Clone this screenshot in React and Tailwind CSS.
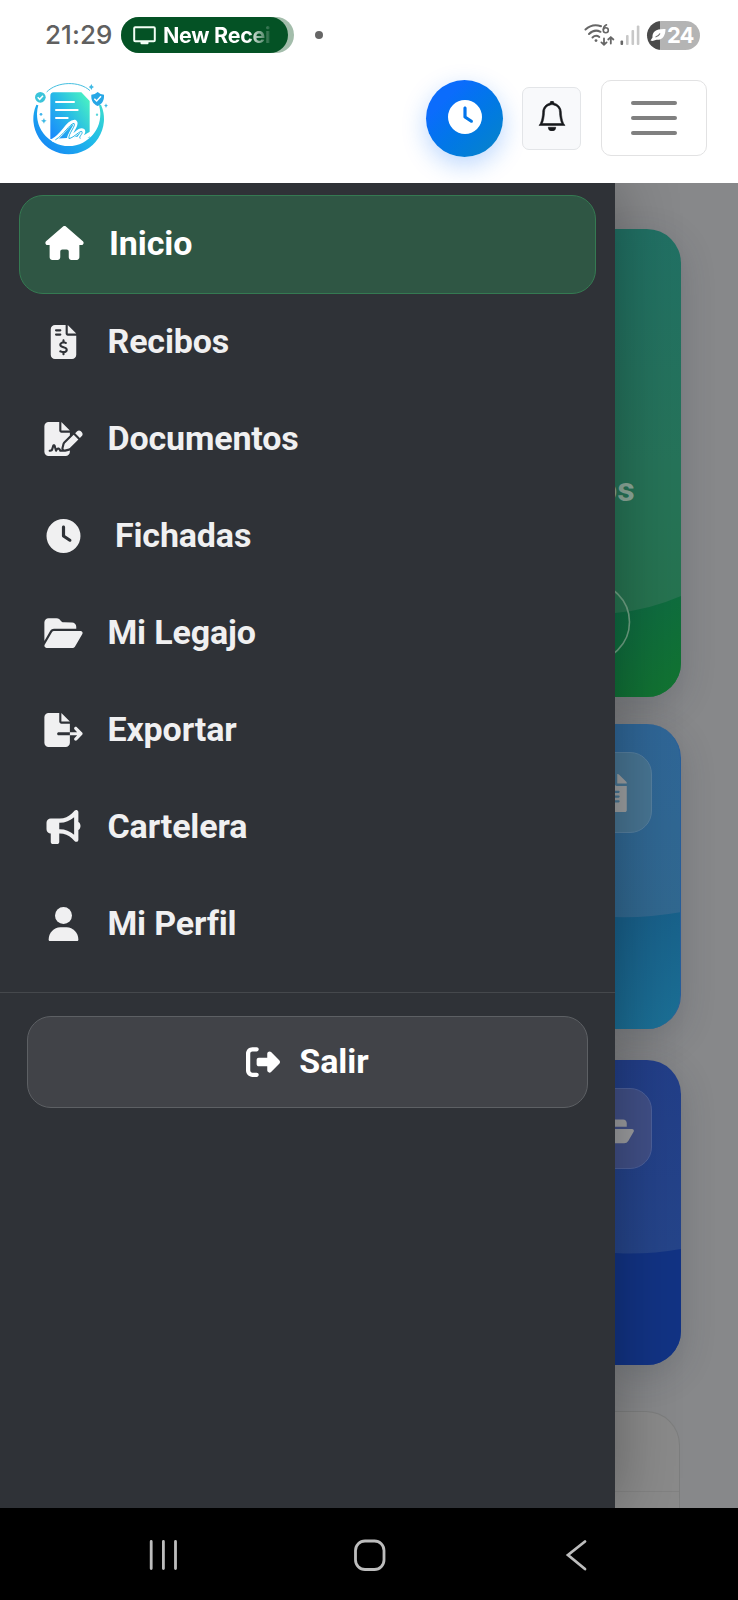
import React from "react";
import {
  FaHouse,
  FaFileInvoiceDollar,
  FaFileSignature,
  FaClock,
  FaFolderOpen,
  FaFileExport,
  FaBullhorn,
  FaRightFromBracket,
} from "react-icons/fa6";
import { FaFileAlt, FaFolderOpen as FaFolderOpenWide } from "react-icons/fa";
import { BsBell } from "react-icons/bs";

function UserIcon({ className }) {
  return (
    <svg className={className} viewBox="0 0 448 512" fill="currentColor">
      <circle cx="224" cy="128" r="128" />
      <path d="M0 492C0 388 78 304 178 304h92c100 0 178 84 178 188 0 12-8 20-20 20H20c-12 0-20-8-20-20z" />
    </svg>
  );
}

const items = [
  { label: "Recibos", icon: FaFileInvoiceDollar },
  { label: "Documentos", icon: FaFileSignature },
  { label: "Fichadas", icon: FaClock, indent: true },
  { label: "Mi Legajo", icon: FaFolderOpen },
  { label: "Exportar", icon: FaFileExport },
  { label: "Cartelera", icon: FaBullhorn },
  { label: "Mi Perfil", icon: UserIcon },
];

function StatusBar() {
  return (
    <div className="flex h-[70px] items-center pl-[45px] pr-[38px] font-['Inter',sans-serif]">
      <span className="w-[76px] whitespace-nowrap text-[26px] font-medium leading-none tracking-[0.1px] text-[#606060]">
        21:29
      </span>
      <div className="h-[36px] w-[173px] rounded-full bg-[#a3bdab]">
        <div className="flex h-full w-[167px] items-center gap-[7px] overflow-hidden rounded-full bg-[#045225] pl-[12px]">
          <svg width="23" height="19" viewBox="0 0 23 19" fill="none">
            <rect x="1.2" y="1.2" width="20.6" height="14" rx="1" stroke="#f2fff5" strokeWidth="2" />
            <path d="M7.5 16h8v1.2a1 1 0 0 1-1 1h-6a1 1 0 0 1-1-1z" fill="#f2fff5" />
          </svg>
          <span className="w-[112px] overflow-hidden whitespace-nowrap bg-linear-to-r from-white from-76% to-transparent to-98% bg-clip-text text-[21.5px] font-bold leading-[30px] tracking-[-0.3px] text-transparent">
            New Recei
          </span>
        </div>
      </div>
      <span className="ml-[21px] h-[8px] w-[8px] rounded-full bg-[#666]" />
      <svg className="ml-auto" width="31" height="24" viewBox="0 0 31 24" fill="none" stroke="#666" strokeLinecap="round">
        <path d="M1.500 6.500C6 2.300 12 1.400 17 3.200" strokeWidth="2" />
        <path d="M5 11c3.500-3.500 8-4 11.500-2.200" strokeWidth="2" />
        <path d="M8.500 14.500c2-1.900 4.800-2 6.800-.5" strokeWidth="2" />
        <circle cx="12" cy="17.600" r="1.400" fill="#666" stroke="none" />
        <path d="M22.500 1.800c-2 1-3.200 3-3.200 5" strokeWidth="1.600" />
        <circle cx="21.800" cy="7.300" r="2.500" strokeWidth="1.600" />
        <path d="M20 15.500v6M17.400 19.400l2.600 2.300 2.600-2.300" strokeWidth="1.800" />
        <path d="M26.800 20.500v-6M24.200 16.500l2.600-2.300 2.600 2.300" strokeWidth="1.800" />
      </svg>
      <svg className="ml-[5px]" width="20" height="20" viewBox="0 0 20 20">
        <rect x="0.500" y="15.500" width="2.600" height="4.500" rx="1" fill="#666" />
        <rect x="6" y="10" width="2.600" height="10" rx="1" fill="#c8c8c8" />
        <rect x="11.500" y="5" width="2.600" height="15" rx="1" fill="#c8c8c8" />
        <rect x="16.800" y="0.500" width="2.600" height="19.500" rx="1" fill="#c8c8c8" />
      </svg>
      <div className="ml-[7px] flex h-[29px] w-[53px] items-center rounded-full bg-linear-to-r from-[#4b4b4b] from-[13px] to-[#b4b4b4] to-[13px] pl-[3px]">
        <svg width="17" height="14" viewBox="0 0 17 14">
          <path d="M2.500 9.500C2 4 6 .5 15.500 1 15.500 8 12 12.500 6.500 11.800L2.500 13 .5 12.500z" fill="#fff" />
          <path d="M5.500 9c2-.3 3.500-1.500 4.500-3.500" fill="none" stroke="#777" strokeWidth="1.200" />
        </svg>
        <span className="text-[22px] font-bold leading-none tracking-[-1px] text-white">24</span>
      </div>
    </div>
  );
}

function Logo() {
  return (
    <svg width="90" height="90" viewBox="0 0 270 270" fill="none">
      <defs>
        <linearGradient id="ring" x1="60" y1="230" x2="220" y2="60" gradientUnits="userSpaceOnUse">
          <stop stopColor="#1686f5" />
          <stop offset="0.5" stopColor="#1fb9ea" />
          <stop offset="1" stopColor="#3fe0cb" />
        </linearGradient>
        <linearGradient id="sheet" x1="75" y1="170" x2="200" y2="90" gradientUnits="userSpaceOnUse">
          <stop stopColor="#1a8dfb" />
          <stop offset="0.5" stopColor="#28bce6" />
          <stop offset="1" stopColor="#48efc4" />
        </linearGradient>
      </defs>
      <path
        d="M34 89A106 106 0 1 0 228 89L222 91A95 95 0 0 1 131 213A95 95 0 0 1 40 91Z"
        fill="url(#ring)"
      />
      <path d="M65 51C96 19 163 17 195 47" stroke="#45bfe0" strokeWidth="3" />
      <path d="M86 52h83l25 26v110l-30 -4-26 4-62 4V63q0-11 10-11z" fill="url(#sheet)" />
      <path d="M93 81h54M93 105h65M93 129h35" stroke="#fff" strokeWidth="6" strokeLinecap="round" />
      <path
        d="M86 195C116 178 128 141 149 140C160 146 134 174 132 190C148 184 164 160 174 167C180 176 158 185 166 190C176 193 186 180 197 176"
        stroke="#fff"
        strokeWidth="12"
        strokeLinecap="round"
      />
      <path
        d="M92 194C118 178 132 148 147 145C155 150 128 178 132 191C148 187 166 165 171 170C174 178 160 184 165 190"
        stroke="#27b5e6"
        strokeWidth="3"
        strokeLinecap="round"
      />
      <circle cx="46" cy="67" r="16" fill="#3bc4da" />
      <path d="M38 67l6 6 10-11" stroke="#fff" strokeWidth="4.500" />
      <path d="M218 51q8 8 19 8c1 16-4 27-19 34-15-7-20-18-19-34q11 0 19-8z" fill="#27a7e6" />
      <path d="M208 71l7 7 13-14" stroke="#fff" strokeWidth="4.500" />
      <path
        d="M199 27l3 6 5 3-5 3-3 6-3-6-5-3 5-3zM243 85l2 5 4 2-4 2-2 5-2-5-4-2 4-2zM57 129l2 6 6 2-6 3-2 6-3-6-6-3 6-2z"
        fill="#3db9e5"
      />
      <circle cx="48" cy="118" r="4" fill="#42b5ec" />
      <circle cx="216" cy="119" r="3.500" fill="#58d5da" />
    </svg>
  );
}

function Header() {
  return (
    <header className="flex h-[113px] items-start pl-[25px] pr-[31px]">
      <div className="mt-[5px]">
        <Logo />
      </div>
      <button className="ml-auto mt-[10px] flex h-[77px] w-[77px] items-center justify-center rounded-full bg-linear-135 from-[#0b6cfc] from-25% to-[#0c84c6] pb-[3px] shadow-[0_8px_24px_rgba(13,110,253,0.28)]">
        <FaClock className="text-[34px] text-white" />
      </button>
      <button className="ml-[19px] mt-[17px] flex h-[63px] w-[59px] items-center justify-center rounded-[7px] border border-[#e3e5e8] bg-[#f8f9fb] pb-[6px]">
        <BsBell className="text-[30px] text-[#16181b]" stroke="currentColor" strokeWidth="0.3" />
      </button>
      <button className="ml-[20px] mt-[10px] flex h-[76px] w-[106px] items-center justify-center rounded-[10px] border border-[#e2e2e3] bg-white">
        <span className="flex flex-col gap-[11.300px]">
          <span className="h-[4px] w-[46px] rounded-full bg-[#808080]" />
          <span className="h-[4px] w-[46px] rounded-full bg-[#808080]" />
          <span className="h-[4px] w-[46px] rounded-full bg-[#808080]" />
        </span>
      </button>
    </header>
  );
}

function Drawer() {
  return (
    <aside className="z-10 flex w-[615px] shrink-0 flex-col bg-[#2f3237] shadow-[0_0_60px_rgba(0,0,0,0.32)]">
      <nav className="flex flex-col pt-[12px]">
        <a className="ml-[19px] mr-[19px] flex h-[99px] items-center rounded-[24px] border border-[#357a52] bg-[#2f5644] pb-[3px] pl-[25px] text-[34px] font-bold tracking-[-0.1px] text-white">
          <FaHouse className="h-[34px] w-[39px] shrink-0" />
          <span className="ml-[25px]">Inicio</span>
        </a>
        {items.map(({ label, icon: Icon, indent }) => (
          <a
            key={label}
            className="flex h-[97px] items-center pb-[2px] pl-[43.500px] text-[34px] font-bold tracking-[-0.15px] text-[#f0f0f1]"
          >
            <Icon className="h-[34px] w-[39px] shrink-0" />
            <span className={indent ? "ml-[32.500px]" : "ml-[25px]"}>{label}</span>
          </a>
        ))}
      </nav>
      <div className="mt-[19px] border-t border-[#45484c] px-[27px] pt-[23px]">
        <button className="flex h-[92px] w-full items-center justify-center gap-[19px] rounded-[24px] border border-[#5d6064] bg-[#414348] pb-px text-[34px] font-bold text-white">
          <FaRightFromBracket />
          <span>Salir</span>
        </button>
      </div>
    </aside>
  );
}

function Cards() {
  return (
    <section className="flex min-w-0 flex-1 flex-col overflow-hidden bg-[#87888a] pt-[46px]">
      <div className="relative h-[468px] w-[65.500px] shrink-0 overflow-hidden rounded-r-[34px] bg-linear-to-b from-[#217064] via-[#267359] via-50% to-[#267349] shadow-[0_10px_34px_rgba(40,50,70,0.22)]">
        <svg className="absolute inset-0" width="66" height="468" viewBox="0 0 66 468">
          <defs>
            <linearGradient id="g" x1="0" y1="380" x2="66" y2="468" gradientUnits="userSpaceOnUse">
              <stop stopColor="#0e6a43" />
              <stop offset="1" stopColor="#12742f" />
            </linearGradient>
          </defs>
          <path d="M0 384Q34 381 66 367V468H0z" fill="url(#g)" />
          <circle cx="-24.500" cy="393" r="39" fill="none" stroke="#6ea083" strokeWidth="1.600" />
        </svg>
        <span className="absolute left-[-17px] top-[240px] text-[34px] font-bold leading-[40px] text-[#8da89a]">os</span>
      </div>

      <div className="relative mt-[27px] h-[305px] w-[65.500px] shrink-0 overflow-hidden rounded-r-[34px] border-r border-[#275e9a] bg-linear-to-b from-[#2f6697] to-[#32698b] shadow-[0_10px_34px_rgba(40,50,70,0.22)]">
        <svg className="absolute inset-0" width="66" height="305" viewBox="0 0 66 305">
          <defs>
            <linearGradient id="b" x1="0" y1="200" x2="50" y2="305" gradientUnits="userSpaceOnUse">
              <stop stopColor="#185f89" />
              <stop offset="1" stopColor="#1b6f95" />
            </linearGradient>
          </defs>
          <path d="M0 193Q32 194 66 188V305H0z" fill="url(#b)" />
        </svg>
        <div className="relative -ml-[43px] mt-[28px] flex h-[81px] w-[80px] items-center justify-center rounded-[22px] border border-[#567f9f] bg-[#477492]">
          <FaFileAlt className="h-[38px] w-[29px] text-[#9c9fa1]" />
        </div>
      </div>

      <div className="relative mt-[31px] h-[305px] w-[65.500px] shrink-0 overflow-hidden rounded-r-[34px] bg-linear-to-b from-[#223e88] to-[#27488a] shadow-[0_10px_34px_rgba(40,50,70,0.22)]">
        <svg className="absolute inset-0" width="66" height="305" viewBox="0 0 66 305">
          <path d="M0 193Q32 195 66 189V305H0z" fill="#123384" />
        </svg>
        <div className="relative -ml-[43px] mt-[28px] flex h-[81px] w-[80px] items-center justify-center rounded-[22px] border border-[#4d609a] bg-[#404f86]">
          <FaFolderOpenWide className="h-[38px] w-[43px] shrink-0 text-[#9b9c9f]" />
        </div>
      </div>

      <div className="mt-[46px] h-[140px] w-[65px] shrink-0 rounded-tr-[34px] border-r border-t border-[#7d7e7e] bg-[#8a8a8a] pt-[79px]">
        <div className="border-t border-[#828282]" />
      </div>
    </section>
  );
}

function NavigationBar() {
  return (
    <div className="z-20 h-[92px] bg-black">
      <svg width="738" height="92" viewBox="0 0 738 92" fill="none" stroke="#bdbdbd" strokeWidth="2.800" strokeLinecap="round">
        <path d="M151.200 33.500v27M163.400 33.500v27M175.500 33.500v27" />
        <rect x="355.500" y="33" width="28.500" height="28.500" rx="9.500" />
        <path d="M585 33.500L568 47l17 14" />
      </svg>
    </div>
  );
}

export default function App() {
  return (
    <div className="flex h-[1600px] w-[738px] flex-col overflow-hidden bg-white font-['Roboto',sans-serif]">
      <StatusBar />
      <Header />
      <main className="flex min-h-0 flex-1 overflow-hidden">
        <Drawer />
        <Cards />
      </main>
      <NavigationBar />
    </div>
  );
}
